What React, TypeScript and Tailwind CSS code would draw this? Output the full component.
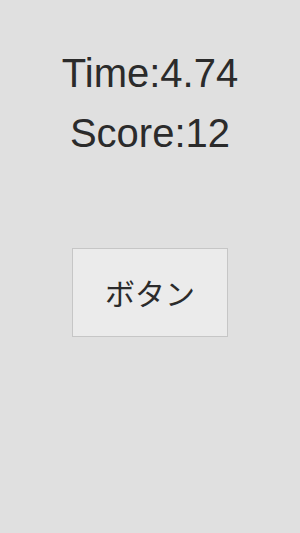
export default function App() {
  return (
    <div className="w-[300px] h-[533px] bg-[#e0e0e0] flex flex-col items-center pt-[43px]" style={{ fontFamily: '"Liberation Sans", Arial, sans-serif' }}>
      <div className="text-[40px] leading-[60px] text-[#2b2b2b]">Time:4.74</div>
      <div className="text-[40px] leading-[60px] text-[#2b2b2b]">Score:12</div>
      <button className="mt-[85px] w-[156px] h-[89px] bg-[#ebebeb] border border-[#c6c6c6] flex items-center justify-center text-[30px] text-[#2b2b2b]" style={{ fontFamily: '"Noto Sans CJK JP", "Liberation Sans", sans-serif' }}>
        ボタン
      </button>
    </div>
  );
}
